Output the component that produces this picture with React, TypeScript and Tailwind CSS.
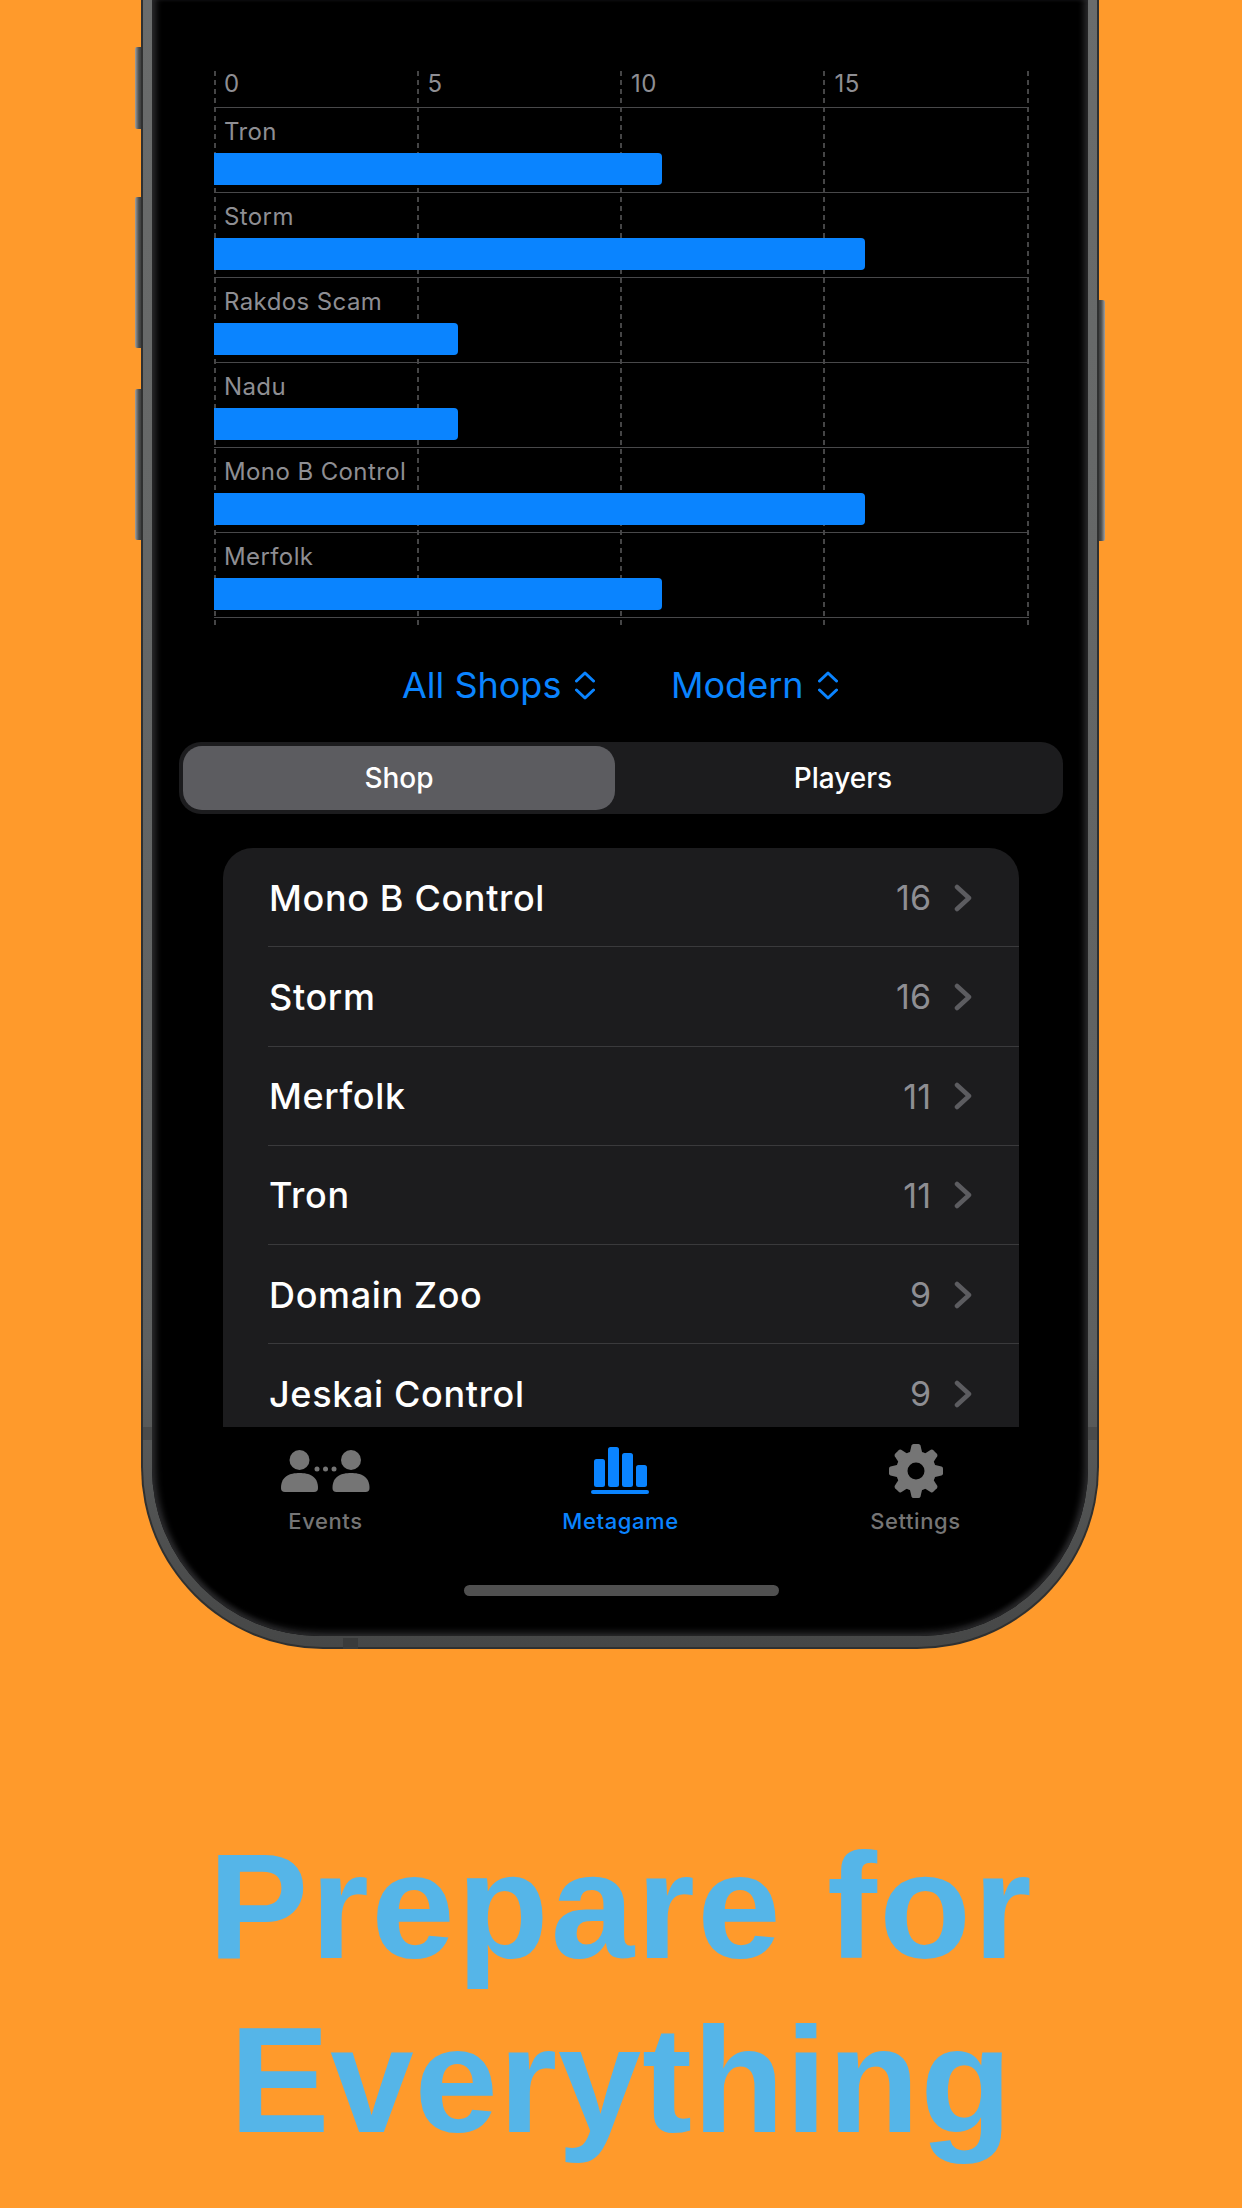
const bars = [
  { name: "Tron", w: 448 },
  { name: "Storm", w: 651 },
  { name: "Rakdos Scam", w: 244 },
  { name: "Nadu", w: 244 },
  { name: "Mono B Control", w: 651 },
  { name: "Merfolk", w: 448 },
];
const rows = [
  { name: "Mono B Control", v: 16 },
  { name: "Storm", v: 16 },
  { name: "Merfolk", v: 11 },
  { name: "Tron", v: 11 },
  { name: "Domain Zoo", v: 9 },
  { name: "Jeskai Control", v: 9 },
];
const ticks = [0, 5, 10, 15];
const font = { fontFamily: "Inter, sans-serif" };

function UpDown() {
  return (
    <svg width="20" height="29" viewBox="0 0 20 29" fill="none" stroke="#0a84ff" strokeWidth="3" strokeLinecap="round" strokeLinejoin="round">
      <path d="M1.500 10 L10 2 L18.500 10" />
      <path d="M1.500 19 L10 27 L18.500 19" />
    </svg>
  );
}

function Chevron() {
  return (
    <svg width="18" height="28" viewBox="0 0 18 28" fill="none" stroke="#5c5c60" strokeWidth="4.500" strokeLinecap="round" strokeLinejoin="round">
      <path d="M3 3 L15 14 L3 25" />
    </svg>
  );
}

function EventsIcon() {
  return (
    <svg width="92" height="44" viewBox="0 0 92 44" fill="#757575">
      <circle cx="19.500" cy="11" r="10" />
      <path d="M1 39 C1 27 10 24 19.500 24 C29 24 38 27 38 39 Q38 43 34 43 L5 43 Q1 43 1 39 Z" />
      <circle cx="71" cy="11" r="10" />
      <path d="M52.500 39 C52.500 27 61.500 24 71 24 C80.500 24 89.500 27 89.500 39 Q89.500 43 85.500 43 L56.500 43 Q52.500 43 52.500 39 Z" />
      <circle cx="37" cy="20" r="2.500" />
      <circle cx="45.500" cy="20" r="2.500" />
      <circle cx="54" cy="20" r="2.500" />
    </svg>
  );
}

function MetaIcon() {
  return (
    <svg width="60" height="50" viewBox="0 0 60 50" fill="#0a84ff">
      <rect x="3" y="13" width="11" height="28" rx="2.500" />
      <rect x="17" y="1" width="11" height="40" rx="2.500" />
      <rect x="31" y="7" width="11" height="34" rx="2.500" />
      <rect x="45" y="19" width="11" height="22" rx="2.500" />
      <rect x="0" y="44" width="58" height="4" rx="2" />
    </svg>
  );
}

function Gear() {
  const teeth = [0, 45, 90, 135, 180, 225, 270, 315];
  return (
    <svg width="56" height="56" viewBox="-28 -28 56 56">
      <path
        fillRule="evenodd"
        fill="#757575"
        d="M0 -20 A20 20 0 1 1 0 20 A20 20 0 1 1 0 -20 Z M0 -8.500 A8.500 8.500 0 1 0 0 8.500 A8.500 8.500 0 1 0 0 -8.500 Z"
      />
      {teeth.map((t) => (
        <path key={t} d="M-6.500 -17 L-4.500 -25.500 Q-4 -27 -2.500 -27 L2.500 -27 Q4 -27 4.500 -25.500 L6.500 -17 Z" fill="#757575" transform={`rotate(${t})`} />
      ))}
    </svg>
  );
}

function Tab({ icon, label, active }: { icon: React.ReactNode; label: string; active?: boolean }) {
  return (
    <div className="w-[295px] flex flex-col items-center">
      <div className="h-[61px] flex items-center justify-center">{icon}</div>
      <span className={`mt-[6px] text-[22px] leading-[28px] tracking-[0.6px] font-[450] ${active ? "text-[#0a84ff]" : "text-[#757575]"}`}>{label}</span>
    </div>
  );
}

export default function App() {
  return (
    <div className="w-[1242px] h-[2208px] overflow-hidden bg-[#ff9a2b] flex flex-col" style={font}>
      <div className="relative ml-[141px] w-[958px] h-[1649px] shrink-0">
        <div className="absolute left-[-6px] top-[47px] w-[8px] h-[82px] rounded-l-[2px] bg-gradient-to-r from-[#a0a0a0] via-[#4a4c4c] to-[#333333]" />
        <div className="absolute left-[-6px] top-[197px] w-[8px] h-[151px] rounded-l-[2px] bg-gradient-to-r from-[#a0a0a0] via-[#4a4c4c] to-[#333333]" />
        <div className="absolute left-[-6px] top-[389px] w-[8px] h-[151px] rounded-l-[2px] bg-gradient-to-r from-[#a0a0a0] via-[#4a4c4c] to-[#333333]" />
        <div className="absolute right-[-6px] top-[300px] w-[8px] h-[241px] rounded-r-[2px] bg-gradient-to-l from-[#a0a0a0] via-[#4a4c4c] to-[#333333]" />
        <div className="relative h-full rounded-b-[182px] bg-[#2f3030] px-[2px] pb-[2px]">
          <div className="h-full rounded-b-[180px] bg-gradient-to-b from-[#6a6c6c] via-[#5e6060] via-[82%] to-[#464747] px-[9px] pb-[11px]">
            <div className="h-full rounded-b-[168px] bg-black overflow-hidden shadow-[inset_7px_0_6px_-3px_#2a2a2c,inset_-7px_0_6px_-3px_#2a2a2c,inset_0_-7px_6px_-3px_#2a2a2c] flex flex-col pt-[71px]">
              <div className="relative ml-[62px] w-[815px]">
                <svg className="absolute left-0 top-0" width="815" height="554" stroke="#5c5c5e" strokeWidth="1.500" strokeDasharray="5 4" fill="none">
                  <line x1="1" y1="0" x2="1" y2="554" />
                  <line x1="204" y1="0" x2="204" y2="554" />
                  <line x1="407" y1="0" x2="407" y2="554" />
                  <line x1="610" y1="0" x2="610" y2="554" />
                  <line x1="814" y1="0" x2="814" y2="554" />
                </svg>
                <div className="relative flex h-[37px] border-b border-[#48484a] text-[24px] leading-[24px] tracking-[0.4px] text-[#8e8e93]">
                  {ticks.map((t) => (
                    <div key={t} className="w-[203.500px] pl-[10px] pt-[1px]">{t}</div>
                  ))}
                </div>
                {bars.map((b) => (
                  <div key={b.name} className="relative h-[85px] border-b border-[#48484a] flex flex-col">
                    <div className="h-[45px] pl-[10px] pt-[9px] text-[24px] leading-[29px] tracking-[0.4px] text-[#8e8e93]">{b.name}</div>
                    <div className="h-[32px] bg-[#0a84ff] rounded-r-[4px]" style={{ width: b.w }} />
                  </div>
                ))}
              </div>
              <div className="mt-[37px] h-[60px] flex items-center text-[36px] leading-[44px] text-[#0a84ff]">
                <div className="ml-[250px] w-[269px] flex items-center gap-[14px]">
                  <span>All Shops</span>
                  <UpDown />
                </div>
                <div className="flex items-center gap-[14px]">
                  <span>Modern</span>
                  <UpDown />
                </div>
              </div>
              <div className="mt-[27px] ml-[27px] mr-[25px] h-[72px] shrink-0 rounded-[22px] bg-[#1c1c1e] p-[4px] flex text-[28px] font-[450] text-white">
                <div className="w-[432px] rounded-[19px] bg-[#5c5c60] flex items-center justify-center">Shop</div>
                <div className="flex-1 pl-[12px] flex items-center justify-center">Players</div>
              </div>
              <div className="mt-[34px] ml-[71px] w-[796px] h-[579px] shrink-0 rounded-t-[30px] bg-[#1c1c1e] overflow-hidden">
                {rows.map((r, i) => (
                  <div key={r.name} className="relative h-[99.250px] pl-[46px] pr-[47px] flex items-center">
                    <span className="flex-1 text-[36px] font-medium tracking-[0.65px] text-white">{r.name}</span>
                    <span className="text-[34px] text-[#8e8e93]">{r.v}</span>
                    <span className="ml-[23px]"><Chevron /></span>
                    {i < 5 && <div className="absolute left-[45px] right-0 bottom-0 h-px bg-[#3a3a3c]" />}
                  </div>
                ))}
              </div>
              <div className="flex-1 flex ml-[26px] pt-[13px]">
                <Tab icon={<EventsIcon />} label="Events" />
                <Tab icon={<MetaIcon />} label="Metagame" active />
                <Tab icon={<Gear />} label="Settings" />
              </div>
              <div className="mb-[40px] ml-[312px] w-[315px] h-[11px] rounded-full bg-[#505050]" />
            </div>
          </div>
        </div>
        <div className="absolute left-[2px] top-[1427px] w-[9px] h-[13px] bg-[#4a4b4b]" />
        <div className="absolute right-[2px] top-[1427px] w-[9px] h-[13px] bg-[#4a4b4b]" />
        <div className="absolute left-[202px] bottom-0 w-[15px] h-[11px] bg-[#3a3b3b]" />
      </div>
      <div className="mt-[170px] text-center text-[150px] leading-[174px] font-bold text-[#55b5e8]" style={{ fontFamily: '"Liberation Sans", sans-serif' }}>
        <div className="tracking-[2.3px]">Prepare for</div>
        <div className="tracking-[0.8px]">Everything</div>
      </div>
    </div>
  );
}
